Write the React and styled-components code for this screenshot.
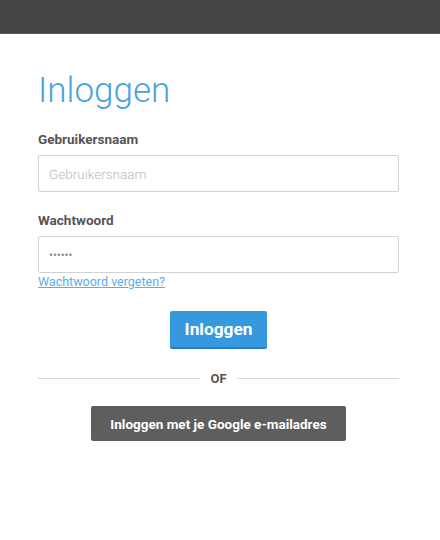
import React from 'react'
import styled, { createGlobalStyle } from 'styled-components'

const Global = createGlobalStyle`
  body {
    margin: 0;
    background: #fff;
    font-family: Roboto, "Liberation Sans", sans-serif;
  }
`

const TopBar = styled.header`
  height: 33px;
  background: #444444;
  border-bottom: 1px solid #5a5a5a;
`

const Main = styled.main`
  width: 361px;
  margin: 0 0 0 38px;
  padding-top: 36px;
  display: flex;
  flex-direction: column;
`

const Title = styled.h1`
  margin: 0 0 20px 0;
  font-weight: 300;
  font-size: 35px;
  line-height: 42px;
  color: #4aa2de;
`

const Label = styled.label`
  display: block;
  font-weight: 700;
  font-size: 13.5px;
  line-height: 15px;
  color: #555;
  margin-bottom: 8px;
`

const Field = styled.div`
  display: flex;
  flex-direction: column;
  margin-bottom: ${p => p.$gap || 0}px;
`

const Input = styled.input`
  box-sizing: border-box;
  width: 100%;
  height: 37px;
  border: 1px solid #d2d2d2;
  border-radius: 2px;
  padding: 0 10px;
  font-family: Roboto, "Liberation Sans", sans-serif;
  font-size: ${p => (p.type === 'password' ? 12 : 13.5)}px;
  font-weight: 300;
  color: ${p => (p.type === 'password' ? '#888' : '#555')};
  outline: none;
  &::placeholder {
    color: #b9b9b9;
  }
`

const Forgot = styled.a`
  margin-top: 2px;
  font-size: 12.5px;
  line-height: 14px;
  color: #5aaeea;
  text-decoration: underline;
  align-self: flex-start;
`

const PrimaryButton = styled.button`
  align-self: center;
  margin-top: 22px;
  width: 97px;
  height: 38px;
  border: none;
  border-bottom: 2px solid #2a7fc0;
  border-radius: 2px;
  background: #3799dd;
  color: #fff;
  font-family: Roboto, "Liberation Sans", sans-serif;
  font-weight: 700;
  font-size: 17.3px;
`

const Divider = styled.div`
  display: flex;
  align-items: center;
  margin-top: 22px;
  gap: 10px;
  font-weight: 700;
  font-size: 13px;
  line-height: 15px;
  color: #555;
  &::before,
  &::after {
    content: '';
    flex: 1;
    height: 1px;
    background: #d8d8d8;
  }
`

const GoogleButton = styled.button`
  align-self: center;
  margin-top: 20px;
  width: 255px;
  height: 35px;
  border: none;
  border-radius: 2px;
  background: #5e5e5e;
  color: #fff;
  font-family: Roboto, "Liberation Sans", sans-serif;
  font-weight: 700;
  font-size: 13.5px;
`

export default function App() {
  return (
    <>
      <Global />
      <TopBar />
      <Main>
        <Title>Inloggen</Title>
        <Field $gap={21}>
          <Label>Gebruikersnaam</Label>
          <Input placeholder="Gebruikersnaam" />
        </Field>
        <Field>
          <Label>Wachtwoord</Label>
          <Input type="password" defaultValue="123456" />
          <Forgot href="#">Wachtwoord vergeten?</Forgot>
        </Field>
        <PrimaryButton>Inloggen</PrimaryButton>
        <Divider>OF</Divider>
        <GoogleButton>Inloggen met je Google e-mailadres</GoogleButton>
      </Main>
    </>
  )
}
